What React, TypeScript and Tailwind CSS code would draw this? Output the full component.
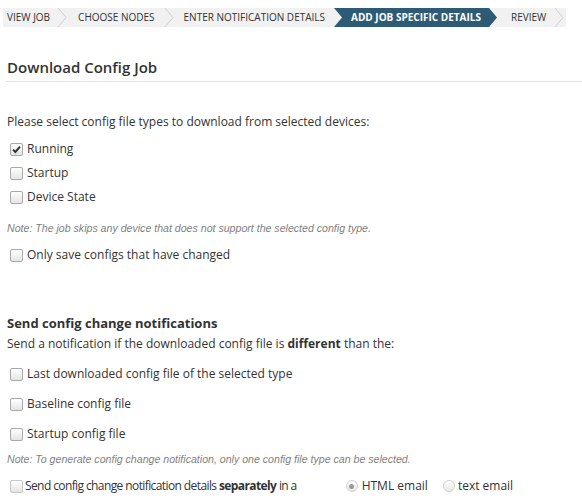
import React from "react";

const Chevron = () => (
  <svg width="10" height="19" viewBox="0 0 10 19" className="shrink-0">
    <polyline points="1,0 9,9.5 1,19" fill="none" stroke="#cfcfcf" strokeWidth="1" />
  </svg>
);

const Check = ({ checked = false, faded = false }: { checked?: boolean; faded?: boolean }) => (
  <span
    className={`relative inline-block w-[13px] h-[13px] shrink-0 rounded-[2px] border ${faded ? "border-[#c8c8c8]" : "border-[#a9a9a9]"} bg-gradient-to-b from-[#ffffff] to-[#e4e4e4]`}
  >
    {checked && (
      <svg width="11" height="11" viewBox="0 0 11 11" className="absolute left-[0px] top-[0px]">
        <path d="M2 5.6 L4.4 8 L9 2.6" fill="none" stroke="#333" strokeWidth="2" />
      </svg>
    )}
  </span>
);

const Radio = ({ checked = false }: { checked?: boolean }) => (
  <span className="relative inline-flex items-center justify-center w-[12px] h-[12px] shrink-0 rounded-full border border-[#d0d0d0] bg-gradient-to-b from-[#ffffff] to-[#e8e8e8]">
    {checked && <span className="w-[5px] h-[5px] rounded-full bg-[#9a9a9a]" />}
  </span>
);

const Row = ({ label, checked, h }: { label: React.ReactNode; checked?: boolean; h: string }) => (
  <div className={`flex items-center ${h} pl-[10px]`}>
    <Check checked={checked} />
    <span className="ml-[4px] leading-[18px]">{label}</span>
  </div>
);

export default function App() {
  return (
    <div
      className="w-[582px] h-[504px] bg-white text-[#333333] text-[12px] overflow-hidden"
      style={{ fontFamily: '"Open Sans", sans-serif' }}
    >
      <div className="pt-[8px] pl-[3px]">
        <div className="flex items-center h-[19px] w-[563px] bg-[#f1f1f1] text-[10px] text-[#333] uppercase leading-[19px]">
          <span className="pl-[4px] pr-[7px]">View Job</span>
          <Chevron />
          <span className="pl-[11px] pr-[9px]">Choose Nodes</span>
          <Chevron />
          <span className="pl-[10px] pr-[9px]">Enter Notification Details</span>
          <span
            className="h-[19px] w-[163px] bg-[#2d5b75] text-white font-bold pl-[17px] flex items-center"
            style={{ clipPath: "polygon(0 0, calc(100% - 8px) 0, 100% 50%, calc(100% - 8px) 100%, 0 100%, 8px 50%)" }}
          >
            Add Job Specific Details
          </span>
          <span className="pl-[14px] pr-[8px]">Review</span>
          <Chevron />
        </div>
      </div>

      <div className="mt-[30px] ml-[6px] border-b border-[#e3e3e3] pb-[4px]">
        <div className="pl-[1px] text-[15px] font-semibold leading-[20px]">Download Config Job</div>
      </div>

      <div className="pl-[7px] mt-[31px] leading-[18px]">
        Please select config file types to download from selected devices:
      </div>
      <div className="mt-[6px]">
        <Row h="h-[24px]" label="Running" checked />
        <Row h="h-[24px]" label="Startup" />
        <Row h="h-[24px]" label="Device State" />
      </div>
      <div
        className="pl-[7px] mt-[11px] text-[10.6px] italic text-[#7f7f7f] leading-[16px]"
        style={{ fontFamily: '"Liberation Sans", Arial, sans-serif' }}
      >
        Note: The job skips any device that does not support the selected config type.
      </div>
      <div className="mt-[7px]">
        <Row h="h-[24px]" label="Only save configs that have changed" />
      </div>

      <div className="pl-[7px] mt-[47px] text-[13px] font-bold leading-[18px]">Send config change notifications</div>
      <div className="pl-[7px] mt-[3px] leading-[18px]">
        Send a notification if the downloaded config file is <b>different</b> than the:
      </div>
      <div className="mt-[6px]">
        <Row h="h-[30px]" label="Last downloaded config file of the selected type" />
        <Row h="h-[30px]" label="Baseline config file" />
        <Row h="h-[30px]" label="Startup config file" />
      </div>
      <div
        className="pl-[7px] mt-[2px] text-[10.6px] italic text-[#7f7f7f] leading-[16px]"
        style={{ fontFamily: '"Liberation Sans", Arial, sans-serif' }}
      >
        Note: To generate config change notification, only one config file type can be selected.
      </div>
      <div className="mt-[7px] flex items-center h-[24px] pl-[10px]">
        <Check faded />
        <span className="ml-[2px] text-[12px] tracking-[-0.6px] leading-[18px]">
          Send config change notification details <b>separately</b> in a
        </span>
        <span className="ml-[49px] flex items-center">
          <Radio checked />
          <span className="ml-[4px]">HTML email</span>
        </span>
        <span className="ml-[15px] flex items-center">
          <Radio />
          <span className="ml-[3px]">text email</span>
        </span>
      </div>
    </div>
  );
}
